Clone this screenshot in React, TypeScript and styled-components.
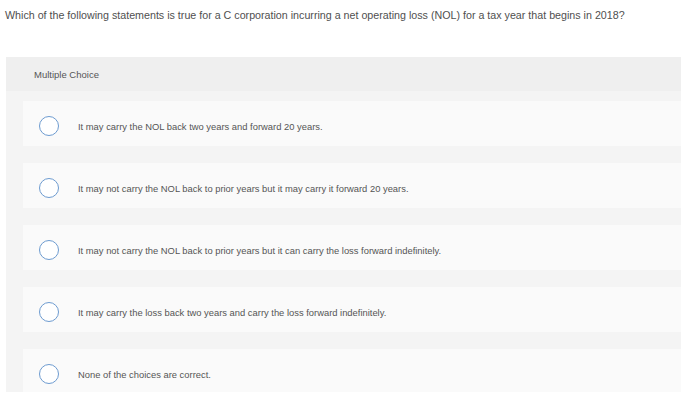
import * as React from 'react';
import styled, { createGlobalStyle } from 'styled-components';

const GlobalStyle = createGlobalStyle`
  html, body {
    margin: 0;
    padding: 0;
    background: #ffffff;
  }
  body {
    font-family: "Liberation Sans", Arial, sans-serif;
    color: #4a4a4a;
  }
`;

const choices = [
  'It may carry the NOL back two years and forward 20 years.',
  'It may not carry the NOL back to prior years but it may carry it forward 20 years.',
  'It may not carry the NOL back to prior years but it can carry the loss forward indefinitely.',
  'It may carry the loss back two years and carry the loss forward indefinitely.',
  'None of the choices are correct.'
];

export default function App(): React.ReactElement {
  return (
    <>
      <GlobalStyle />
      <Page>
        <Question>
          Which of the following statements is true for a C corporation incurring a net operating
          loss (NOL) for a tax year that begins in 2018?
        </Question>
        <Panel>
          <PanelHeader>Multiple Choice</PanelHeader>
          <ChoiceList>
            {choices.map((text) => (
              <Choice key={text}>
                <Radio />
                <ChoiceText>{text}</ChoiceText>
              </Choice>
            ))}
          </ChoiceList>
        </Panel>
      </Page>
    </>
  );
}

const Page = styled.div`
  width: 681px;
  height: 403px;
  overflow: hidden;
`;

const Question = styled.p`
  margin: 0;
  padding: 8px 0 0 5px;
  font-size: 10.7px;
  line-height: 14px;
  color: #4f4f4f;
  white-space: nowrap;
`;

const Panel = styled.section`
  margin: 35px 0 0 6px;
  height: 335px;
  background-color: #f4f4f4;
  overflow: hidden;
`;

const PanelHeader = styled.div`
  display: flex;
  align-items: center;
  height: 34px;
  padding-left: 28px;
  background-color: #efefef;
  font-size: 9.5px;
  color: #555555;
`;

const ChoiceList = styled.div`
  display: flex;
  flex-direction: column;
  gap: 17px;
  padding: 10px 0 0 17px;
`;

const Choice = styled.div`
  display: flex;
  align-items: center;
  gap: 19px;
  height: 45px;
  box-sizing: border-box;
  padding: 5px 0 0 16px;
  background-color: #fafafa;
`;

const Radio = styled.span`
  flex: none;
  width: 20px;
  height: 20px;
  box-sizing: border-box;
  border: 1.5px solid #6d9bd0;
  border-radius: 50%;
  background-color: #ffffff;
`;

const ChoiceText = styled.span`
  font-size: 9.4px;
  color: #555555;
  white-space: nowrap;
`;
